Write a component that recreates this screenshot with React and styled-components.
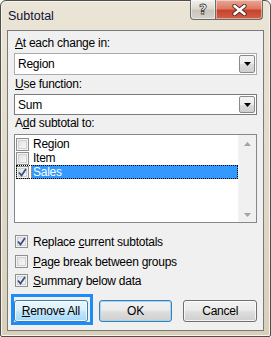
import React from "react";
import styled, { createGlobalStyle } from "styled-components";

const Global = createGlobalStyle`
  html, body { margin: 0; padding: 0; background: #fff; }
  body { font-family: "Segoe UI", "Liberation Sans", Arial, sans-serif; }
`;

const FONT = `"Segoe UI", "Liberation Sans", Arial, sans-serif`;

const Window = styled.div`
  position: relative;
  width: 271px;
  height: 337px;
  box-sizing: border-box;
  border: 1px solid #4e4e4e;
  border-radius: 6px 6px 2px 2px;
  background: linear-gradient(180deg, #eae5d6 0%, #e3dccb 40%, #d9d0ba 100%);
  box-shadow: inset 0 0 0 1px #f7f4ec;
  display: flex;
  flex-direction: column;
  padding: 0 6px 5px 6px;
  font-family: ${FONT};
  font-size: 12px;
  letter-spacing: -0.25px;
  color: #000;
`;

const TitleBar = styled.div`
  height: 29px;
  display: flex;
  align-items: flex-start;
  justify-content: space-between;
  flex-shrink: 0;
`;

const Title = styled.div`
  padding-top: 8px;
  padding-left: 1px;
  font-size: 12.5px;
  color: #10103a;
  letter-spacing: 0;
`;

const Caption = styled.div`
  display: flex;
  margin-right: 1px;
  margin-top: -1px;
`;

const CapBtn = styled.div`
  height: 20px;
  width: ${(p) => p.$w}px;
  box-sizing: border-box;
  border: 1px solid #6b6b6b;
  border-top: none;
  display: flex;
  align-items: center;
  justify-content: center;
  background: ${(p) =>
    p.$close
      ? "linear-gradient(180deg, #e9a797 0%, #dc7a63 45%, #c7432a 55%, #d2604a 100%)"
      : "linear-gradient(180deg, #f3f1ec 0%, #ddd9d0 45%, #c9c5bc 55%, #d6d2ca 100%)"};
  border-radius: ${(p) => (p.$close ? "0 0 4px 0" : "0 0 0 4px")};
  ${(p) => p.$close && "border-left: none;"}
  box-shadow: inset 0 0 0 1px rgba(255,255,255,0.45);
`;

const HelpGlyph = styled.span`
  font-family: "DejaVu Sans", sans-serif;
  font-weight: bold;
  font-size: 14px;
  line-height: 1;
  color: #ffffff;
  -webkit-text-stroke: 0.8px #3f3f3f;
  margin-top: -1px;
`;

const Client = styled.div`
  flex: 1;
  border: 1px solid #7a7a7a;
  background: #f0f0f0;
  display: flex;
  flex-direction: column;
  padding: 0 6px;
`;

const Label = styled.div`
  line-height: 15px;
  padding-left: 1px;
  margin-top: ${(p) => p.$mt}px;
  white-space: nowrap;
  u { text-decoration: underline; text-underline-offset: 1px; }
`;

const Select = styled.div`
  margin-top: 2px;
  height: ${(p) => p.$h}px;
  box-sizing: border-box;
  border: 1px solid ${(p) => p.$border};
  background: #fff;
  display: flex;
  align-items: stretch;
`;

const SelectText = styled.div`
  flex: 1;
  padding-left: 3px;
  display: flex;
  align-items: center;
`;

const ArrowBtn = styled.div`
  width: 16px;
  margin: 1px;
  box-sizing: border-box;
  border: 1px solid #8a8a8a;
  border-radius: 2px;
  background: linear-gradient(180deg, #f4f4f4 0%, #ececec 50%, #dcdcdc 51%, #cfcfcf 100%);
  display: flex;
  align-items: center;
  justify-content: center;
`;

const ListBox = styled.div`
  margin-top: 3px;
  height: 89px;
  box-sizing: border-box;
  border: 1px solid #828790;
  background: #fff;
  display: flex;
`;

const ListItems = styled.div`
  flex: 1;
  padding: 2px 0 0 1px;
  display: flex;
  flex-direction: column;
`;

const ListRow = styled.div`
  height: 14px;
  display: flex;
  align-items: center;
  box-sizing: border-box;
  position: relative;
`;

const FocusRect = styled.div`
  position: absolute;
  inset: 0;
  border: 1px dotted #000;
  pointer-events: none;
`;

const ItemText = styled.div`
  height: 14px;
  line-height: 14px;
  flex: 1;
  margin-left: 2px;
  padding-left: 2px;
  background: ${(p) => (p.$sel ? "#3399ff" : "transparent")};
  color: ${(p) => (p.$sel ? "#fff" : "#000")};
  ${(p) => p.$sel && "outline: 1px dotted #ff8a00; outline-offset: -1px;"}
`;

const ScrollBar = styled.div`
  width: 17px;
  background: #f0f0f0;
  border-left: 1px solid #f4f4f4;
  display: flex;
  flex-direction: column;
  justify-content: space-between;
  align-items: center;
  padding: 7px 0 5px;
`;

const Box = styled.div`
  width: 13px;
  height: 13px;
  box-sizing: border-box;
  border: 1px solid #8e8f8f;
  background: linear-gradient(135deg, #dcdcdc 0%, #f0f0f0 60%, #fbfbfb 100%);
  box-shadow: inset 0 0 0 1px #f4f4f4, inset 0 0 0 2px #cfd0d2;
  flex-shrink: 0;
  display: flex;
  align-items: center;
  justify-content: center;
`;

const CheckRow = styled.div`
  display: flex;
  align-items: center;
  gap: 5px;
  height: 13px;
  margin-top: ${(p) => p.$mt}px;
  padding-left: 1px;
  white-space: nowrap;
  u { text-decoration: underline; text-underline-offset: 1px; }
`;

const Buttons = styled.div`
  display: flex;
  gap: 11px;
  margin-top: 13px;
`;

const Button = styled.div`
  position: relative;
  width: 74px;
  height: 22px;
  box-sizing: border-box;
  border: 1px solid ${(p) => (p.$hot ? "#3c7fb1" : p.$def ? "#3c7fb1" : "#707070")};
  border-radius: 3px;
  background: ${(p) =>
    p.$hot
      ? "linear-gradient(180deg, #eaf6fd 0%, #d9f0fc 45%, #bee6fd 55%, #a7d9f5 100%)"
      : "linear-gradient(180deg, #f2f2f2 0%, #ebebeb 45%, #dddddd 55%, #cfcfcf 100%)"};
  box-shadow: inset 0 0 0 1px ${(p) => (p.$def ? "#9fd6f7" : "rgba(255,255,255,0.75)")};
  display: flex;
  align-items: center;
  justify-content: center;
  u { text-decoration: underline; text-underline-offset: 1px; }
`;

const Highlight = styled.div`
  position: absolute;
  left: -4px;
  top: -7px;
  right: -6px;
  bottom: -4px;
  border: 3px solid #1d8cf8;
  pointer-events: none;
`;

const Check = () => (
  <svg width="9" height="9" viewBox="0 0 9 9">
    <path d="M1 4.5 L3.5 7.5 L8 1" fill="none" stroke="#3a4f86" strokeWidth="1.8" />
  </svg>
);

const CheckBox = ({ checked }) => <Box>{checked && <Check />}</Box>;

const DownArrow = ({ color = "#000" }) => (
  <svg width="7" height="4" viewBox="0 0 7 4">
    <path d="M0 0 H7 L3.5 4 Z" fill={color} />
  </svg>
);

const UpArrow = ({ color }) => (
  <svg width="7" height="4" viewBox="0 0 7 4">
    <path d="M0 4 H7 L3.5 0 Z" fill={color} />
  </svg>
);

const CloseIcon = () => (
  <svg width="15" height="12" viewBox="0 0 15 12">
    <path d="M2.5 2 L12.5 10 M12.5 2 L2.5 10" stroke="#5a2a20" strokeWidth="4.4" strokeLinecap="round" />
    <path d="M2.5 2 L12.5 10 M12.5 2 L2.5 10" stroke="#ffffff" strokeWidth="2.6" strokeLinecap="round" />
  </svg>
);

export default function App() {
  const items = [
    { name: "Region", checked: false },
    { name: "Item", checked: false },
    { name: "Sales", checked: true, sel: true },
  ];
  return (
    <>
      <Global />
      <Window>
        <TitleBar>
          <Title>Subtotal</Title>
          <Caption>
            <CapBtn $w={26}>
              <HelpGlyph>?</HelpGlyph>
            </CapBtn>
            <CapBtn $w={47} $close>
              <CloseIcon />
            </CapBtn>
          </Caption>
        </TitleBar>
        <Client>
          <Label $mt={5}>
            <u>A</u>t each change in:
          </Label>
          <Select $h={22} $border="#abadb3">
            <SelectText>Region</SelectText>
            <ArrowBtn>
              <DownArrow />
            </ArrowBtn>
          </Select>
          <Label $mt={2}>
            <u>U</u>se function:
          </Label>
          <Select $h={21} $border="#7a7a7a">
            <SelectText>Sum</SelectText>
            <ArrowBtn>
              <DownArrow />
            </ArrowBtn>
          </Select>
          <Label $mt={1}>
            A<u>d</u>d subtotal to:
          </Label>
          <ListBox>
            <ListItems>
              {items.map((it) => (
                <ListRow key={it.name}>
                  <CheckBox checked={it.checked} />
                  <ItemText $sel={it.sel}>{it.name}</ItemText>
                  {it.sel && <FocusRect />}
                </ListRow>
              ))}
            </ListItems>
            <ScrollBar>
              <UpArrow color="#a3a3a3" />
              <DownArrow color="#a3a3a3" />
            </ScrollBar>
          </ListBox>
          <CheckRow $mt={12}>
            <CheckBox checked />
            <span>
              Replace <u>c</u>urrent subtotals
            </span>
          </CheckRow>
          <CheckRow $mt={7}>
            <CheckBox />
            <span>
              <u>P</u>age break between groups
            </span>
          </CheckRow>
          <CheckRow $mt={6}>
            <CheckBox checked />
            <span>
              <u>S</u>ummary below data
            </span>
          </CheckRow>
          <Buttons>
            <Button $hot>
              <span>
                <u>R</u>emove All
              </span>
              <Highlight />
            </Button>
            <Button $def>OK</Button>
            <Button>Cancel</Button>
          </Buttons>
        </Client>
      </Window>
    </>
  );
}
